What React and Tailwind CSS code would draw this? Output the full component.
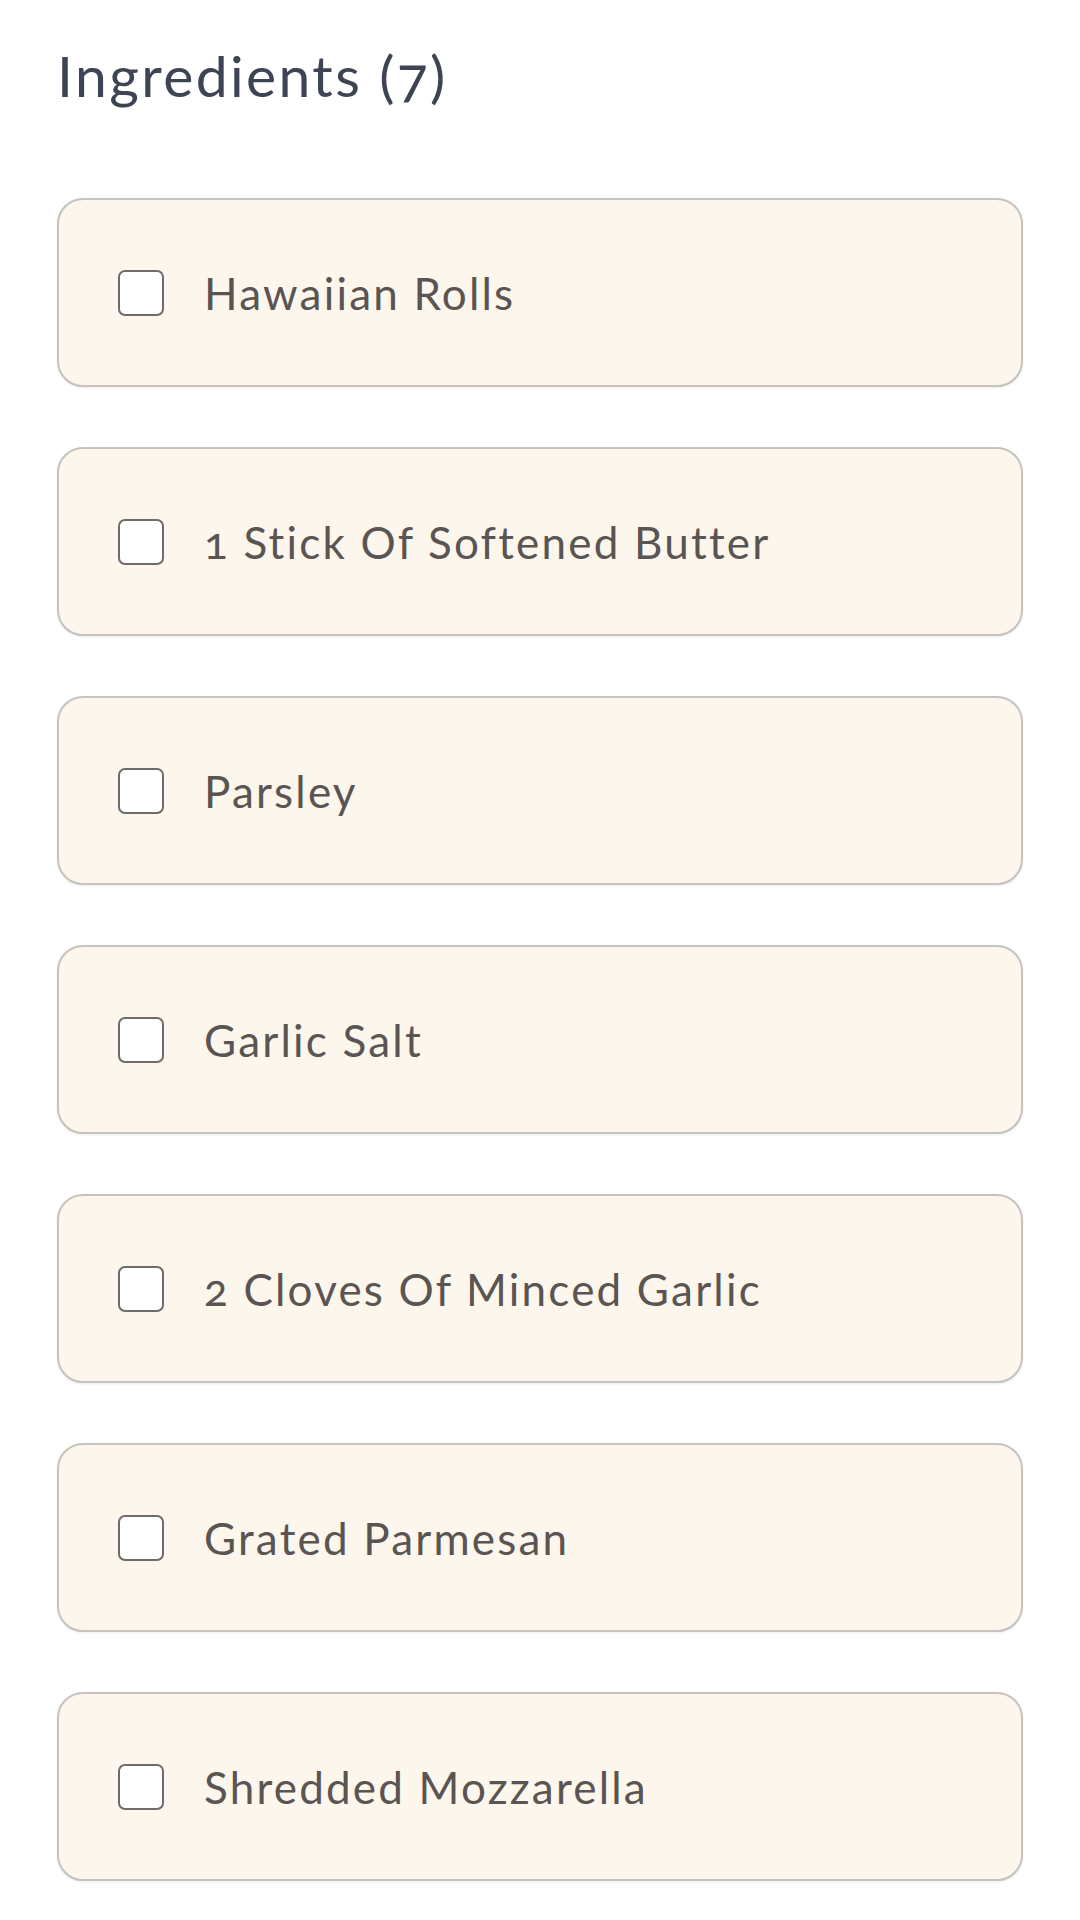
const items = [
  "Hawaiian Rolls",
  "1 Stick Of Softened Butter",
  "Parsley",
  "Garlic Salt",
  "2 Cloves Of Minced Garlic",
  "Grated Parmesan",
  "Shredded Mozzarella",
];

export default function App() {
  return (
    <div
      className="min-h-[1920px] bg-white px-[57px] pt-[40px]"
      style={{ fontFamily: "Lato, 'Noto Sans', sans-serif" }}
    >
      <h2 className="text-[57px] leading-[70px] tracking-[2.4px] text-[#3f4455] font-normal oldstyle-nums">
        Ingredients (7)
      </h2>
      <div className="mt-[88px] flex flex-col gap-[60px]">
        {items.map((t) => (
          <label
            key={t}
            className="flex h-[189px] items-center gap-[40px] rounded-[26px] border-2 border-[#c6c2be] bg-[#fdf6ec] pl-[59px] shadow-[0_1px_3px_rgba(0,0,0,0.08)]"
          >
            <span className="h-[46px] w-[46px] shrink-0 rounded-[7px] border-2 border-[#6e6b69] bg-white" />
            <span className="text-[44px] leading-none tracking-[2.2px] text-[#5a5452] oldstyle-nums">
              {t}
            </span>
          </label>
        ))}
      </div>
    </div>
  );
}
